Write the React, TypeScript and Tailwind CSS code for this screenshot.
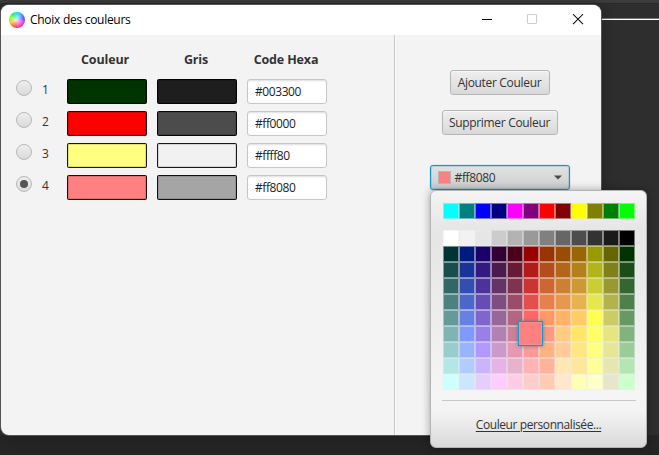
import React from 'react';

const basicColors = [
  '#00ffff', '#008080', '#0000ff', '#000080', '#ff00ff', '#800080',
  '#ff0000', '#800000', '#ffff00', '#808000', '#008000', '#00ff00',
];

const paletteRows = [
  'ffffff f2f2f2 e6e6e6 cccccc b3b3b3 999999 808080 666666 4d4d4d 333333 1a1a1a 000000',
  '003333 001a80 1a0068 330033 4d001a 990000 993300 994d00 996600 999900 666600 003300',
  '1a4d4d 1a3399 331a80 4d1a4d 661a33 b31a1a b34d1a b3661a b3801a b3b31a 80801a 1a4d1a',
  '336666 334db3 4d3399 663366 80334d cc3333 cc6633 cc8033 cc9933 cccc33 999933 336633',
  '4d8080 4d66cc 664db3 804d80 994d66 e64d4d e6804d e6994d e6b34d e6e64d b3b34d 4d804d',
  '669999 6680e6 8066cc 996699 b36680 ff6666 ff9966 ffb366 ffcc66 ffff4d cccc66 669966',
  '80b3b3 8099ff 9980e6 b380b3 cc8099 ff8080 ff9980 ffcc80 ffe666 ffff66 e6e680 80b380',
  '99cccc 99b3ff b399ff cc99cc e699b3 ff9999 ffb380 ffcc99 ffe680 ffff80 e6e699 99cc99',
  'b3e6e6 b3ccff ccb3ff e6b3e6 e6b3cc ffb3b3 ffb399 ffe6b3 ffe699 ffff99 e6e6b3 b3e6b3',
  'ccffff cce6ff e6ccff ffccff ffcce6 ffcccc ffccb3 ffe6cc ffffb3 ffffcc e6e6cc ccffcc',
].map((row) => row.split(' ').map((c) => '#' + c));

const entries = [
  { id: 1, color: '#003300', gray: '#1e1e1e', code: '#003300' },
  { id: 2, color: '#ff0000', gray: '#4c4c4c', code: '#ff0000' },
  { id: 3, color: '#ffff80', gray: '#f1f1f1', code: '#ffff80' },
  { id: 4, color: '#ff8080', gray: '#a5a5a5', code: '#ff8080', selected: true },
];

function Square({ color }: { color: string }) {
  return (
    <div
      className="h-4 w-4 border border-[#ebebeb]/50"
      style={{ backgroundColor: color }}
    />
  );
}

function Swatch({ color }: { color: string }) {
  return (
    <div
      className="h-[25px] w-20 rounded-[2px] border border-black/90 shadow-[inset_0_0_0_1px_rgba(0,0,0,0.12)]"
      style={{ backgroundColor: color }}
    />
  );
}

function Radio({ selected }: { selected?: boolean }) {
  return (
    <div className="mb-[7px] flex h-4 w-4 items-center justify-center rounded-full border border-[#b8b8b8] bg-linear-to-b from-[#efefef] to-[#dadada]">
      {selected && <div className="h-2 w-2 rounded-full bg-[#555]" />}
    </div>
  );
}

function TitleBar() {
  return (
    <div className="flex h-[30px] items-center bg-white pl-2">
      <div className="h-4 w-4 rounded-full bg-[radial-gradient(circle,rgba(255,255,255,0.85),transparent_70%),conic-gradient(from_0deg,#00e0ff_0deg,#38a0ff_35deg,#5040ff_75deg,#e020ff_110deg,#ff20a0_150deg,#ff4030_200deg,#ffb020_245deg,#80ff20_290deg,#10e860_325deg,#00e0ff)]" />
      <span className="ml-[5px] text-[12px] leading-4 tracking-[-0.28px] text-black">Choix des couleurs</span>
      <div className="ml-auto flex items-center pr-[17px]">
        <svg width="12" height="12" viewBox="0 0 12 12" className="mr-[33px]">
          <path d="M1 5.5h10" stroke="#000" fill="none" />
        </svg>
        <svg width="12" height="12" viewBox="0 0 12 12" className="mr-[34px]">
          <rect x="1.5" y=".5" width="9" height="9" rx=".5" stroke="#ccc" fill="none" />
        </svg>
        <svg width="12" height="12" viewBox="0 0 12 12">
          <path d="M1 .2l10 10M11 .2L1 10.2" stroke="#111" strokeWidth="1.1" fill="none" />
        </svg>
      </div>
    </div>
  );
}

function Button({ children, className }: { children: React.ReactNode; className: string }) {
  return (
    <div
      className={
        'flex h-[25px] items-center justify-center whitespace-nowrap rounded-[3px] border border-[#b5b5b5] bg-linear-to-b from-[#efefef] to-[#d9d9d9] shadow-[inset_0_1px_0_#f8f8f8] ' +
        className
      }
    >
      {children}
    </div>
  );
}

function Palette() {
  return (
    <div className="absolute left-[430px] top-[190px] flex h-[258px] w-[217px] flex-col rounded-[6px] border border-[#b4b4b4] bg-[linear-gradient(#f4f4f4,#e6e6e6_15%,#e8e8e8_30%,#f5f5f5_80%,#f4f4f4_86%,#d9d9d9)] px-3 pt-3 shadow-[0_0_8px_rgba(0,0,0,0.35)]">
      <div className="flex w-48">
        {basicColors.map((c) => <Square key={c} color={c} />)}
      </div>
      <div className="relative mt-[11px] grid w-48 grid-cols-12">
        {paletteRows.flat().map((c, i) => <Square key={i} color={c} />)}
        <div className="absolute left-[75px] top-[91px] h-[25px] w-[25px] border border-[#1398c9] bg-[#ff8080] shadow-[0_0_4px_#5a7f90,inset_0_0_0_1px_#f58e92]" />
      </div>
      <div className="mt-[10px] -ml-px h-px w-[194px] bg-[#c8c8c8]" />
      <div className="mt-4 flex justify-center">
        <span className="whitespace-nowrap tracking-[-0.41px] underline decoration-1 underline-offset-2">Couleur personnalisée...</span>
      </div>
    </div>
  );
}

export default function App() {
  return (
    <div className="relative h-[455px] w-[659px] overflow-hidden bg-[#2e2e2e] bg-[linear-gradient(#3c3c3e_0_3px,#29292a_3px_4px,transparent_4px_18px,#777_18px_19px,#fff_19px_20px,transparent_20px_435px,#252525_435px)] px-px pt-[5px] font-['Open_Sans','Noto_Sans',sans-serif] text-[12px] leading-4 text-[#333]">
      <div className="h-[430px] w-[600px] overflow-hidden rounded-[8px] bg-[#f3f3f3] shadow-[0_0_0_1px_#555,0_0_16px_rgba(0,0,0,0.3)]">
        <TitleBar />
        <div className="flex h-[400px]">
          <div className="w-[394px] border-r border-[#c8c8c8] pl-[15px] pt-[17px]">
            <div className="flex h-4 pl-[49px] text-[12.5px] font-bold tracking-[-0.15px]">
              <div className="w-20 text-center">Couleur</div>
              <div className="ml-[11px] w-20 text-center">Gris</div>
              <div className="ml-[10px] w-20 whitespace-nowrap text-center">Code Hexa</div>
            </div>
            <div className="mt-[11px] flex flex-col gap-[7px]">
              {entries.map((e) => (
                <div key={e.id} className="flex h-[25px] items-center">
                  <Radio selected={e.selected} />
                  <span className="ml-[10px] w-[25px] pb-[3px]">{e.id}</span>
                  <Swatch color={e.color} />
                  <div className="w-[10px]" />
                  <Swatch color={e.gray} />
                  <div className="ml-[10px] flex h-[25px] w-20 items-center rounded-[3px] border border-[#c6c6c6] bg-white pl-[7px] tracking-[-0.42px] text-[#222] shadow-[inset_0_2px_2px_-1px_#ddd]">
                    {e.code}
                  </div>
                </div>
              ))}
            </div>
          </div>
          <div className="flex grow flex-col items-center border-l border-[#fafafa] pr-px pt-[35px]">
            <Button className="ml-[3px] w-[100px] tracking-[-0.32px]">Ajouter Couleur</Button>
            <Button className="ml-[3px] mt-[15px] w-[116px] tracking-[-0.32px]">Supprimer Couleur</Button>
            <div className="ml-[3px] mt-[30px] flex h-[25px] w-[140px] items-center rounded-[3px] border border-[#1398c9] bg-linear-to-b from-[#e2e2e2] to-[#cecece] pl-[7px] pr-[7px] shadow-[0_0_1px_#1398c9,inset_0_0_0_1px_rgba(90,180,215,0.35)]">
              <div className="h-[13px] w-[13px] border border-[#b8b8b8] bg-[#ff8080]" />
              <span className="ml-1 tracking-[-0.35px]">#ff8080</span>
              <svg width="8" height="5" viewBox="0 0 8 5" className="ml-auto">
                <path d="M0 .5h8L4 4.5z" fill="#494949" />
              </svg>
            </div>
          </div>
        </div>
      </div>
      <Palette />
    </div>
  );
}
